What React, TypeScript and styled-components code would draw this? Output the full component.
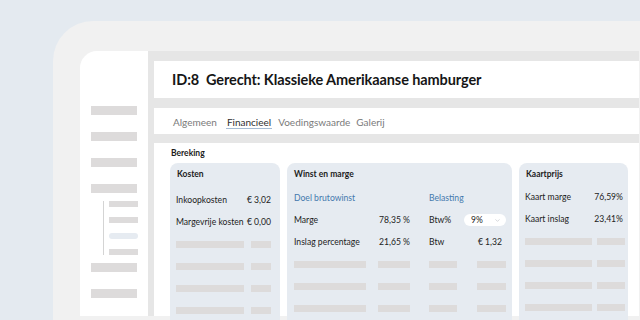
import styled, { createGlobalStyle } from 'styled-components';
import { ChevronDown } from 'lucide-react';

const GlobalStyle = createGlobalStyle`
  html, body {
    margin: 0;
    padding: 0;
    width: 640px;
    height: 320px;
    overflow: hidden;
    background: #e4eaf0;
    font-family: Lato, "Noto Sans", sans-serif;
    color: #1c1c1c;
  }
`;

function BarRow({ widths }: { widths: number[] }) {
  return (
    <Row>
      {widths.map((w, i) => (
        <Bar key={i} $w={w} />
      ))}
    </Row>
  );
}

export default function App() {
  return (
    <>
      <GlobalStyle />
      <Page>
        <Frame>
          <Shell>
            <Sidebar>
              <NavBar />
              <NavBar />
              <NavBar />
              <NavBar />
              <SubNav>
                <SubBar />
                <SubBar />
                <SubBar $active />
                <SubBar />
              </SubNav>
              <NavBar />
              <NavBar />
            </Sidebar>
            <Main>
              <Header>
                <Title>ID:8&nbsp;&nbsp;Gerecht: Klassieke Amerikaanse hamburger</Title>
              </Header>
              <Tabs>
                <Tab>Algemeen</Tab>
                <Tab $active>Financieel</Tab>
                <Tab>Voedingswaarde</Tab>
                <Tab>Galerij</Tab>
              </Tabs>
              <Content>
                <SectionLabel>Bereking</SectionLabel>
                <Cards>
                  <Card $pr={9}>
                    <CardTitle>Kosten</CardTitle>
                    <CardBody $top={9}>
                      <Row>
                        <Label>Inkoopkosten</Label>
                        <Value>€ 3,02</Value>
                      </Row>
                      <Row>
                        <Label>Margevrije kosten</Label>
                        <Value>€ 0,00</Value>
                      </Row>
                      <BarRow widths={[68, 20]} />
                      <BarRow widths={[68, 20]} />
                      <BarRow widths={[68, 20]} />
                      <BarRow widths={[68, 20]} />
                    </CardBody>
                  </Card>

                  <Card $pr={6}>
                    <CardTitle>Winst en marge</CardTitle>
                    <Columns>
                      <CardBody $top={7}>
                        <SubHead>Doel brutowinst</SubHead>
                        <Row>
                          <Label>Marge</Label>
                          <Value>78,35 %</Value>
                        </Row>
                        <Row>
                          <Label>Inslag percentage</Label>
                          <Value>21,65 %</Value>
                        </Row>
                        <BarRow widths={[72, 32]} />
                        <BarRow widths={[72, 32]} />
                        <BarRow widths={[72, 32]} />
                      </CardBody>
                      <CardBody $top={7}>
                        <SubHead>Belasting</SubHead>
                        <Row>
                          <Label>Btw%</Label>
                          <Select>
                            <span>9%</span>
                            <ChevronDown size={7} color="#b9bcc2" strokeWidth={2} />
                          </Select>
                        </Row>
                        <Row>
                          <Label>Btw</Label>
                          <Value $pr={4}>€ 1,32</Value>
                        </Row>
                        <BarRow widths={[28, 29]} />
                        <BarRow widths={[28, 29]} />
                        <BarRow widths={[28, 29]} />
                      </CardBody>
                    </Columns>
                  </Card>

                  <Card $pr={3}>
                    <CardTitle>Kaartprijs</CardTitle>
                    <CardBody $top={6}>
                      <Row>
                        <Label>Kaart marge</Label>
                        <Value $pr={2}>76,59%</Value>
                      </Row>
                      <Row>
                        <Label>Kaart inslag</Label>
                        <Value $pr={2}>23,41%</Value>
                      </Row>
                      <BarRow widths={[67, 28]} />
                      <BarRow widths={[67, 28]} />
                      <BarRow widths={[67, 28]} />
                      <BarRow widths={[67, 28]} />
                    </CardBody>
                  </Card>
                </Cards>
              </Content>
            </Main>
          </Shell>
        </Frame>
      </Page>
    </>
  );
}

const Page = styled.div`
  width: 640px;
  height: 320px;
  padding: 21px 0 0 53px;
  box-sizing: border-box;
  overflow: hidden;
`;

const Frame = styled.div`
  height: 299px;
  background: #f1f1f1;
  border-top-left-radius: 40px;
  padding: 30px 1px 0 27px;
  box-sizing: border-box;
`;

const Shell = styled.div`
  display: flex;
  height: 265px;
`;

const Sidebar = styled.div`
  width: 68px;
  flex-shrink: 0;
  background: #ffffff;
  border-top-left-radius: 17px;
  padding: 55px 11px 0;
  box-sizing: border-box;
  display: flex;
  flex-direction: column;
  gap: 17px;
`;

const NavBar = styled.div`
  height: 9px;
  width: 46px;
  background: #dddbdb;
`;

const SubNav = styled.div`
  margin: -9px 0 -9px 12px;
  padding-left: 5px;
  border-left: 1px solid #d4d4d4;
  display: flex;
  flex-direction: column;
  gap: 10px;
`;

const SubBar = styled.div<{ $active?: boolean }>`
  height: 6px;
  width: 29px;
  border-radius: ${({ $active }) => ($active ? '3px' : '0')};
  background: ${({ $active }) => ($active ? '#e6ebf1' : '#dddbdb')};
`;

const Main = styled.div`
  flex: 1;
  min-width: 0;
  background: #e6e6e6;
  padding: 10px 0 0 6px;
  display: flex;
  flex-direction: column;
`;

const Header = styled.div`
  height: 37px;
  flex-shrink: 0;
  background: #ffffff;
  display: flex;
  align-items: center;
  padding-left: 18px;
`;

const Title = styled.h1`
  margin: 0;
  font-size: 14.5px;
  font-weight: 700;
  letter-spacing: -0.1px;
  color: #161616;
  white-space: nowrap;
`;

const Tabs = styled.div`
  margin-top: 10px;
  height: 26px;
  flex-shrink: 0;
  background: #ffffff;
  display: flex;
  align-items: center;
  gap: 6px;
  padding-left: 19px;
`;

const Tab = styled.span<{ $active?: boolean }>`
  font-size: 10px;
  line-height: 12px;
  color: ${({ $active }) => ($active ? '#2f2f2f' : '#7a7a7a')};
  padding: 2px ${({ $active }) => ($active ? '1px' : '0')} 0;
  margin-left: ${({ $active }) => ($active ? '3px' : '0')};
  border-bottom: 1.5px solid ${({ $active }) => ($active ? '#a5bbd3' : 'transparent')};
`;

const Content = styled.div`
  margin-top: 9px;
  flex: 1;
  background: #ffffff;
  padding: 5px 12px 0 16px;
  display: flex;
  flex-direction: column;
  overflow: visible;
  min-height: 0;
`;

const SectionLabel = styled.div`
  font-size: 8.5px;
  line-height: 11px;
  font-weight: 700;
  color: #1c1c1c;
  margin-left: 1px;
`;

const Cards = styled.div`
  margin-top: 4px;
  display: grid;
  grid-template-columns: 110px 225px 109px;
  column-gap: 7px;
  align-items: start;
`;

const Card = styled.div<{ $pr: number }>`
  background: #e6ebf1;
  border-radius: 8px 8px 0 0;
  padding: 6px ${({ $pr }) => $pr}px 0 6px;
  height: 175px;
  box-sizing: border-box;
`;

const CardTitle = styled.div`
  font-size: 8.5px;
  line-height: 11px;
  font-weight: 700;
  color: #1c1c1c;
  padding-left: 1px;
`;

const Columns = styled.div`
  display: grid;
  grid-template-columns: 116px 77px;
  column-gap: 19px;
  padding-left: 1px;
`;

const CardBody = styled.div<{ $top: number }>`
  margin-top: ${({ $top }) => $top}px;
  display: flex;
  flex-direction: column;
`;

const Row = styled.div`
  height: 22px;
  display: flex;
  align-items: center;
  justify-content: space-between;
`;

const Label = styled.span`
  font-size: 8.6px;
  color: #222222;
  white-space: nowrap;
`;

const Value = styled.span<{ $pr?: number }>`
  font-size: 8.6px;
  color: #222222;
  white-space: nowrap;
  padding-right: ${({ $pr }) => $pr ?? 0}px;
`;

const SubHead = styled.div`
  height: 22px;
  display: flex;
  align-items: center;
  font-size: 8.6px;
  color: #4479ad;
`;

const Bar = styled.div<{ $w: number }>`
  width: ${({ $w }) => $w}px;
  height: 7px;
  background: #dddbdb;
`;

const Select = styled.div`
  width: 42px;
  height: 12px;
  box-sizing: border-box;
  background: #ffffff;
  border-radius: 6px;
  display: flex;
  align-items: center;
  justify-content: space-between;
  padding: 0 5px 0 7px;
  font-size: 8.5px;
  color: #222222;
`;
